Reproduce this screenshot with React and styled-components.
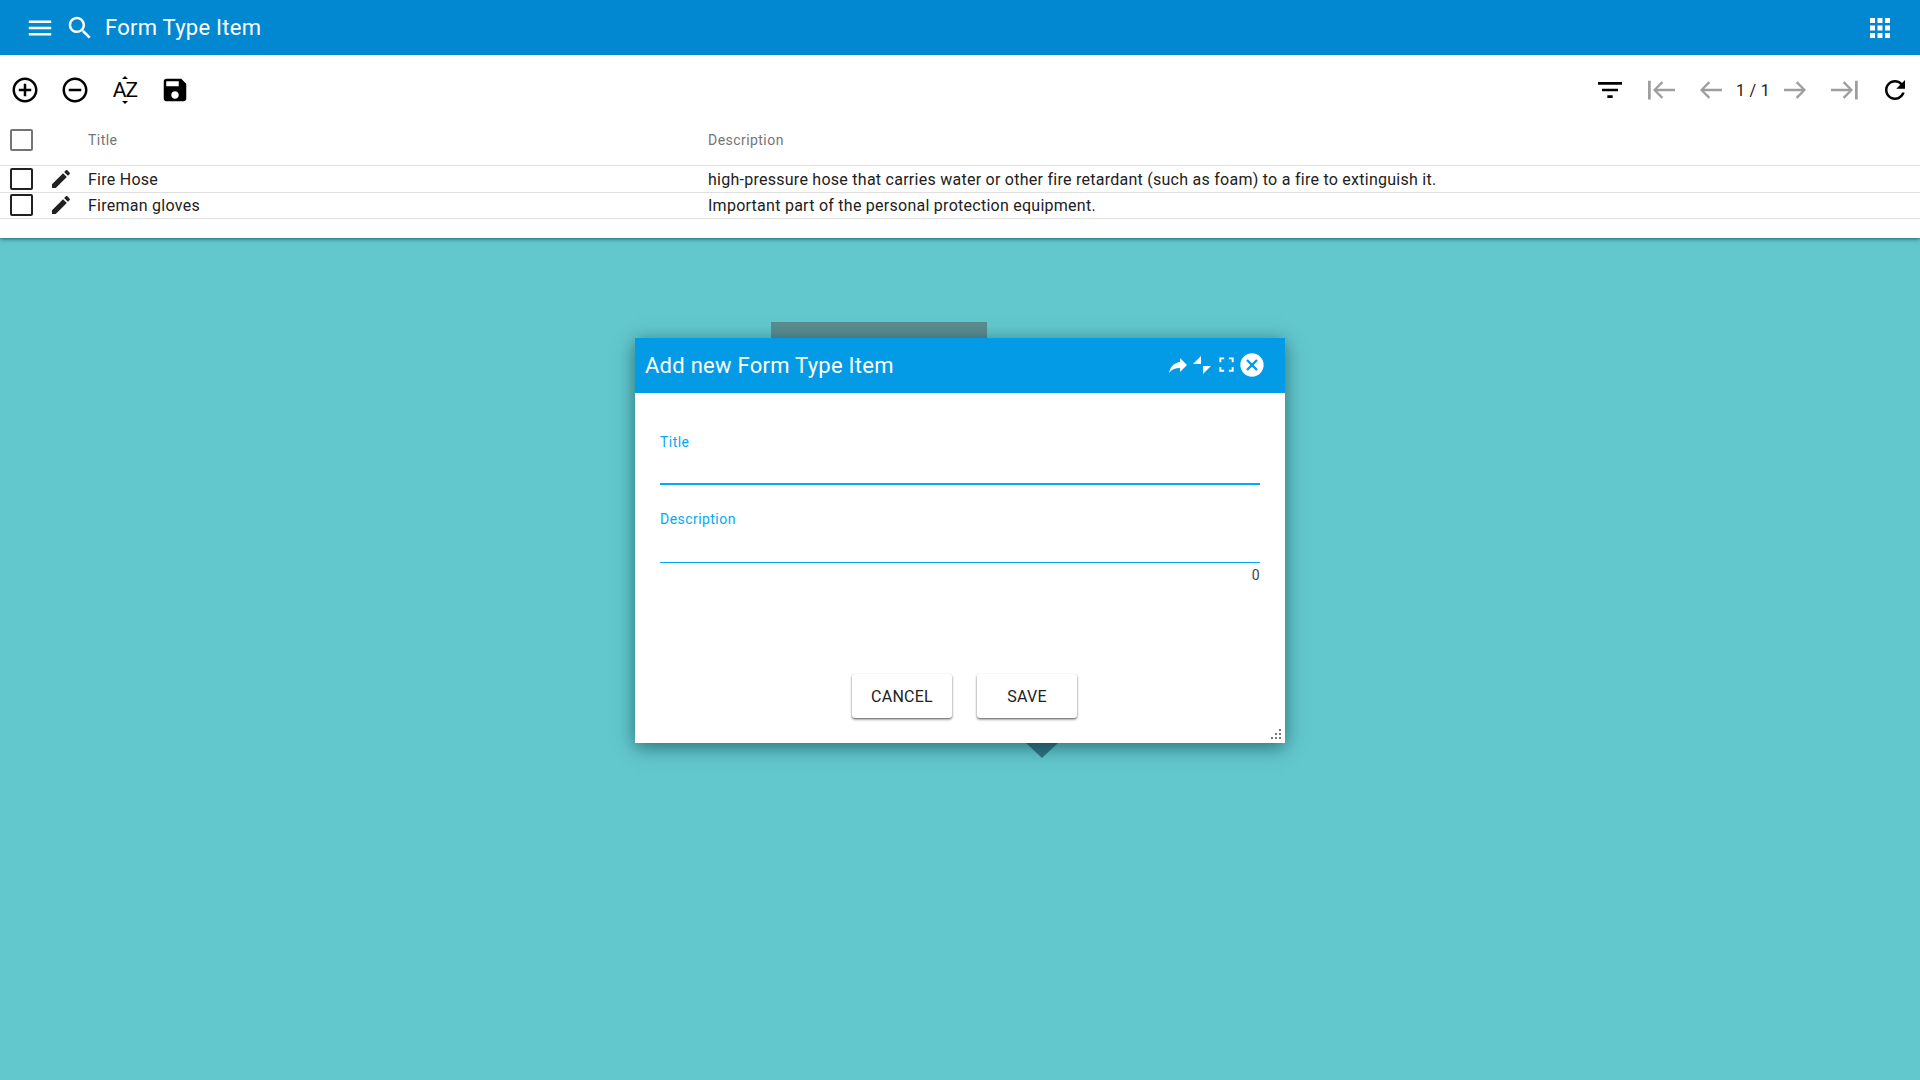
import React from "react";
import styled, { createGlobalStyle } from "styled-components";

const P = {
  menu: "M3 18h18v-2H3v2zm0-5h18v-2H3v2zm0-7v2h18V6H3z",
  search: "M15.5 14h-.79l-.28-.27C15.41 12.59 16 11.11 16 9.5 16 5.91 13.09 3 9.5 3S3 5.91 3 9.5 5.91 16 9.5 16c1.61 0 3.09-.59 4.23-1.57l.27.28v.79l5 4.99L20.49 19l-4.99-5zm-6 0C7.01 14 5 11.99 5 9.5S7.01 5 9.5 5 14 7.01 14 9.5 11.99 14 9.5 14z",
  apps: "M4 8h4V4H4v4zm6 12h4v-4h-4v4zm-6 0h4v-4H4v4zm0-6h4v-4H4v4zm6 0h4v-4h-4v4zm6-10v4h4V4h-4zm-6 4h4V4h-4v4zm6 6h4v-4h-4v4zm0 6h4v-4h-4v4z",
  add: "M13 7h-2v4H7v2h4v4h2v-4h4v-2h-4V7zm-1-5C6.48 2 2 6.48 2 12s4.48 10 10 10 10-4.48 10-10S17.52 2 12 2zm0 18c-4.41 0-8-3.59-8-8s3.59-8 8-8 8 3.59 8 8-3.59 8-8 8z",
  remove: "M7 11v2h10v-2H7zm5-9C6.48 2 2 6.48 2 12s4.48 10 10 10 10-4.48 10-10S17.52 2 12 2zm0 18c-4.41 0-8-3.59-8-8s3.59-8 8-8 8 3.59 8 8-3.59 8-8 8z",
  save: "M17 3H5c-1.11 0-2 .9-2 2v14c0 1.1.89 2 2 2h14c1.1 0 2-.9 2-2V7l-4-4zm-5 16c-1.66 0-3-1.34-3-3s1.34-3 3-3 3 1.34 3 3-1.34 3-3 3zm3-10H5V5h10v4z",
  edit: "M3 17.25V21h3.75L17.81 9.94l-3.75-3.75L3 17.25zM20.71 7.04c.39-.39.39-1.02 0-1.41l-2.34-2.34c-.39-.39-1.02-.39-1.41 0l-1.83 1.83 3.75 3.75 1.83-1.83z",
  filter: "M10 18h4v-2h-4v2zM3 6v2h18V6H3zm3 7h12v-2H6v2z",
  refresh: "M17.65 6.35C16.2 4.9 14.21 4 12 4c-4.42 0-7.99 3.58-7.99 8s3.57 8 7.99 8c3.73 0 6.84-2.55 7.73-6h-2.08c-.82 2.33-3.04 4-5.65 4-3.31 0-6-2.69-6-6s2.69-6 6-6c1.66 0 3.14.69 4.22 1.78L13 11h7V4l-2.35 2.35z",
  back: "M21.6 11H7.4l4.8-4.6L10.8 5 4 12l6.8 7 1.4-1.4L7.4 13h14.2z",
  forward: "M3.2 11h14.2l-4.8-4.6L14 5l6.8 7-6.8 7-1.4-1.4 4.8-4.6H3.2z",
  first: "M2.4 4.5h2.2v15H2.4zM24 11H9.8l4.8-4.6L13.2 5l-6.8 7 6.8 7 1.4-1.4L9.8 13H24z",
  last: "M20 4.5h2.2v15H20zM.8 11H15l-4.8-4.6L11.6 5l6.8 7-6.8 7-1.4-1.4L15 13H.8z",
  share: "M14 9V5l7 7-7 7v-4.1c-5 0-8.5 1.6-11 5.1 1-5 4-10 11-11z",
  collapse: "M11 3v8H3zM13 21v-8h8z",
  full: "M3 3h6v2.4H5.4V9H3zM15 3h6v6h-2.4V5.4H15zM3 15h2.4v3.6H9V21H3zM18.6 15H21v6h-6v-2.4h3.6z",
  close: "M12 2C6.47 2 2 6.47 2 12s4.47 10 10 10 10-4.47 10-10S17.53 2 12 2zm5 13.59L15.59 17 12 13.41 8.41 17 7 15.59 10.59 12 7 8.41 8.41 7 12 10.59 15.59 7 17 8.41 13.41 12 17 15.59z",
};

const Global = createGlobalStyle`
  html, body { margin: 0; padding: 0; height: 100%; }
  body { font-family: Roboto, "Liberation Sans", sans-serif; letter-spacing: .26px; background: #62c8cd; color: #212121; overflow: hidden; }
`;

const Svg = styled.svg`
  display: block;
  flex: none;
  width: ${(p) => p.$size || 24}px;
  height: ${(p) => p.$size || 24}px;
  fill: ${(p) => p.$color || "currentColor"};
`;
const Icon = ({ d, size, color }) => (
  <Svg viewBox="0 0 24 24" $size={size} $color={color}><path d={d} /></Svg>
);

const Page = styled.div`
  position: relative;
  width: 1920px;
  height: 1080px;
  overflow: hidden;
  background: #62c8cd;
`;
const TopPanel = styled.div`
  height: 238px;
  background: #fff;
  box-shadow: 0 1px 4px rgba(0, 60, 70, 0.75);
`;
const AppBar = styled.header`
  height: 55px;
  background: #0288d1;
  color: #fff;
  display: flex;
  align-items: center;
  padding: 0 15px 0 25px;
`;
const AppBarBtn = styled.div`
  width: 30px;
  height: 30px;
  display: flex;
  align-items: center;
  justify-content: center;
  margin-right: 10px;
`;
const AppTitle = styled.h1`
  margin: 0;
  flex: 1;
  font-size: 22px;
  font-weight: 400;
  line-height: 55px;
`;
const Toolbar = styled.div`
  height: 70px;
  display: flex;
  align-items: center;
`;
const ToolBtn = styled.div`
  width: 50px;
  height: 50px;
  display: flex;
  align-items: center;
  justify-content: center;
  color: ${(p) => (p.$off ? "#9e9e9e" : "#000")};
`;
const Spacer = styled.div`
  flex: 1;
`;
const Pager = styled.span`
  width: 35px;
  padding-left: 1px;
  box-sizing: border-box;
  text-align: center;
  font-size: 16px;
  white-space: nowrap;
`;
const Row = styled.div`
  display: grid;
  grid-template-columns: 88px 620px 1fr;
  align-items: center;
  height: ${(p) => p.$h}px;
  border-bottom: 1px solid #e0e0e0;
  font-size: 16px;
  color: #212121;
`;
const HeadRow = styled(Row)`
  height: 30px;
  padding-bottom: 10px;
  font-size: 14px;
  letter-spacing: .45px;
  color: #757575;
`;
const SelectCell = styled.div`
  display: flex;
  align-items: center;
  padding-left: 10px;
  padding-bottom: ${(p) => (p.$tight ? 1 : 0)}px;
  gap: 16px;
`;
const Check = styled.span`
  display: block;
  flex: none;
  width: 23px;
  height: 22px;
  box-sizing: border-box;
  border: 2px solid ${(p) => (p.$head ? "#757575" : "#212121")};
  border-radius: 2px;
`;
const Sort = styled.div`
  position: relative;
  width: 26px;
  height: 26px;
  display: flex;
  align-items: center;
  justify-content: center;
  font-size: 21px;
  line-height: 26px;
  letter-spacing: -1px;
  color: #000;
`;
const SortTip = styled.span`
  position: absolute;
  left: 50%;
  margin-left: -3px;
  ${(p) => (p.$up ? "top: -1px; border-bottom: 3px solid #000;" : "bottom: -1px; border-top: 3px solid #000;")}
  border-left: 3px solid transparent;
  border-right: 3px solid transparent;
`;
const BackTab = styled.div`
  position: absolute;
  left: 771px;
  top: 322px;
  width: 216px;
  height: 20px;
  background: #5a8d90;
`;
const Pointer = styled.div`
  position: absolute;
  left: 1026px;
  top: 743px;
  border-left: 16px solid transparent;
  border-right: 16px solid transparent;
  border-top: 15px solid #2f7480;
`;
const Dialog = styled.section`
  position: absolute;
  left: 635px;
  top: 338px;
  width: 650px;
  height: 405px;
  background: #fff;
  display: flex;
  flex-direction: column;
  box-shadow: 0 4px 18px rgba(0, 50, 60, 0.6);
`;
const DialogBar = styled.div`
  height: 55px;
  flex: none;
  background: #039be5;
  color: #fff;
  display: flex;
  align-items: center;
  padding: 0 19px 0 10px;
`;
const DialogTitle = styled.h2`
  margin: 0;
  flex: 1;
  font-size: 22px;
  font-weight: 400;
`;
const DialogIcons = styled.div`
  display: flex;
  align-items: center;
  margin-bottom: 2px;
`;
const FullSlot = styled.div`
  margin: 0 2px 0 3px;
`;
const DialogBody = styled.div`
  flex: 1;
  display: flex;
  flex-direction: column;
  padding: 41px 25px 0;
`;
const Label = styled.label`
  font-size: 14px;
  line-height: 16px;
  letter-spacing: .45px;
  color: #03a9f4;
`;
const Field = styled.div`
  height: ${(p) => p.$h}px;
  margin-bottom: ${(p) => p.$mb || 0}px;
  border-bottom: ${(p) => p.$line}px solid #03a9f4;
`;
const Counter = styled.div`
  margin-top: 4px;
  text-align: right;
  font-size: 14px;
  line-height: 16px;
  color: #424242;
`;
const Actions = styled.div`
  position: absolute;
  left: 217px;
  top: 336px;
  display: flex;
  gap: 25px;
`;
const Btn = styled.button`
  width: 100px;
  height: 44px;
  border: 0;
  border-radius: 3px;
  background: #fff;
  font: 400 16px Roboto, sans-serif;
  letter-spacing: .26px;
  color: #212121;
  box-shadow: 0 1px 2px rgba(0, 0, 0, 0.5), 0 2px 3px rgba(0, 0, 0, 0.2);
`;
const Grip = styled.svg`
  position: absolute;
  right: 2px;
  bottom: 2px;
  width: 14px;
  height: 14px;
  fill: #757575;
`;

export default function App() {
  return (
    <Page>
      <Global />
      <TopPanel>
        <AppBar>
          <AppBarBtn><Icon d={P.menu} size={30} /></AppBarBtn>
          <AppBarBtn><Icon d={P.search} size={30} /></AppBarBtn>
          <AppTitle>Form Type Item</AppTitle>
          <AppBarBtn><Icon d={P.apps} size={30} /></AppBarBtn>
        </AppBar>
        <Toolbar>
          <ToolBtn><Icon d={P.add} size={30} /></ToolBtn>
          <ToolBtn><Icon d={P.remove} size={30} /></ToolBtn>
          <ToolBtn>
            <Sort><SortTip $up />AZ<SortTip /></Sort>
          </ToolBtn>
          <ToolBtn><Icon d={P.save} size={30} /></ToolBtn>
          <Spacer />
          <ToolBtn><Icon d={P.filter} size={32} /></ToolBtn>
          <ToolBtn $off><Icon d={P.first} size={30} /></ToolBtn>
          <ToolBtn $off><Icon d={P.back} size={30} /></ToolBtn>
          <Pager>1 / 1</Pager>
          <ToolBtn $off><Icon d={P.forward} size={30} /></ToolBtn>
          <ToolBtn $off><Icon d={P.last} size={30} /></ToolBtn>
          <ToolBtn><Icon d={P.refresh} size={30} /></ToolBtn>
        </Toolbar>
        <HeadRow $h={30}>
          <SelectCell><Check $head /></SelectCell>
          <span>Title</span>
          <span>Description</span>
        </HeadRow>
        <Row $h={26}>
          <SelectCell><Check /><Icon d={P.edit} size={24} /></SelectCell>
          <span>Fire Hose</span>
          <span>high-pressure hose that carries water or other fire retardant (such as foam) to a fire to extinguish it.</span>
        </Row>
        <Row $h={25}>
          <SelectCell $tight><Check /><Icon d={P.edit} size={24} /></SelectCell>
          <span>Fireman gloves</span>
          <span>Important part of the personal protection equipment.</span>
        </Row>
      </TopPanel>
      <BackTab />
      <Pointer />
      <Dialog>
        <DialogBar>
          <DialogTitle>Add new Form Type Item</DialogTitle>
          <DialogIcons>
            <Icon d={P.share} size={24} />
            <Icon d={P.collapse} size={24} />
            <FullSlot><Icon d={P.full} size={19} /></FullSlot>
            <Icon d={P.close} size={28} />
          </DialogIcons>
        </DialogBar>
        <DialogBody>
          <Label>Title</Label>
          <Field $h={33} $line={2} $mb={26} />
          <Label>Description</Label>
          <Field $h={35} $line={1} />
          <Counter>0</Counter>
        </DialogBody>
        <Actions>
          <Btn>CANCEL</Btn>
          <Btn>SAVE</Btn>
        </Actions>
        <Grip viewBox="0 0 14 14">
          <rect x="10" y="2" width="2" height="2" />
          <rect x="6" y="6" width="2" height="2" />
          <rect x="10" y="6" width="2" height="2" />
          <rect x="2" y="10" width="2" height="2" />
          <rect x="6" y="10" width="2" height="2" />
          <rect x="10" y="10" width="2" height="2" />
        </Grip>
      </Dialog>
    </Page>
  );
}
